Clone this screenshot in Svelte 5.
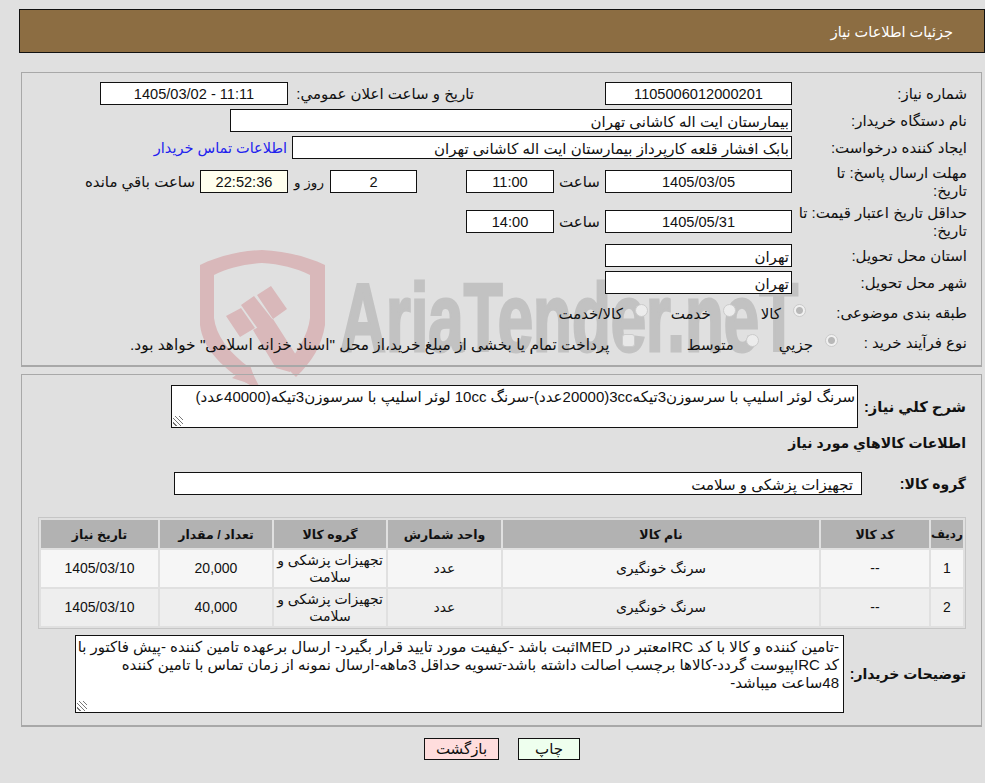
<script>
  const rows = [
    { n: 1, qty: '20,000' },
    { n: 2, qty: '40,000' }
  ];
</script>

<div class="page" dir="rtl">
  <svg class="mark" viewBox="0 0 985 783" aria-hidden="true">
    <path d="M262 250 C240 251 218 256 200 265 L200 325 C203 350 225 372 262 392 L250 368 C228 352 216 335 214 318 L214 275 C228 268 244 264 262 263 C280 264 296 268 310 275 L310 318 C308 335 298 350 286 367 L296 377 C312 362 322 345 325 325 L325 265 C306 256 284 251 262 250 Z" fill="#d9b8ba"/>
    <path d="M226 316 L241 308 L255 328 L240 337 Z M241 305 L254 296 L273 320 L258 329 Z M257 295 L271 286 L287 309 L273 319 Z M253 330 L273 319 L296 355 L290 372 L276 368 Z M232 378 L250 365 L257 386 Z" fill="#d9b8ba"/>
    <text x="340" y="351" class="mark-text" direction="ltr" textLength="458" lengthAdjust="spacingAndGlyphs">AriaTender.neT</text>
  </svg>

  <div class="title">جزئیات اطلاعات نیاز</div>

  <div class="panel top">
    <div class="row r1">
      <span class="lbl">شماره نیاز:</span>
      <span class="box w-main ltr c">1105006012000201</span>
      <span class="lbl-pub">تاریخ و ساعت اعلان عمومي:</span>
      <span class="box w-pub ltr c">1405/03/02 - 11:11</span>
    </div>
    <div class="row r2">
      <span class="lbl">نام دستگاه خریدار:</span>
      <span class="box w-buyer">بیمارستان ایت اله کاشانی تهران</span>
    </div>
    <div class="row r3">
      <span class="lbl">ایجاد کننده درخواست:</span>
      <span class="box w-creator">بابک افشار قلعه کارپرداز بیمارستان ایت اله کاشانی تهران</span>
      <span class="link">اطلاعات تماس خریدار</span>
    </div>
    <div class="row r4">
      <span class="lbl">مهلت ارسال پاسخ: تا<br />تاریخ:</span>
      <span class="box w-main ltr c">1405/03/05</span>
      <span class="lbl-time">ساعت</span>
      <span class="box w-time ltr c">11:00</span>
      <span class="box w-days ltr c">2</span>
      <span class="lbl-days">روز و</span>
      <span class="box w-left ltr c">22:52:36</span>
      <span class="lbl-left">ساعت باقي مانده</span>
    </div>
    <div class="row r5">
      <span class="lbl">حداقل تاریخ اعتبار قیمت: تا<br />تاریخ:</span>
      <span class="box w-main ltr c">1405/05/31</span>
      <span class="lbl-time">ساعت</span>
      <span class="box w-time ltr c">14:00</span>
    </div>
    <div class="row r6">
      <span class="lbl">استان محل تحویل:</span>
      <span class="box w-main">تهران</span>
    </div>
    <div class="row r7">
      <span class="lbl">شهر محل تحویل:</span>
      <span class="box w-main">تهران</span>
    </div>
    <div class="row r8">
      <span class="lbl">طبقه بندی موضوعی:</span>
      <span class="radio on s1"></span><span class="opt o1">کالا</span>
      <span class="radio"></span><span class="opt o2">خدمت</span>
      <span class="radio"></span><span class="opt">کالا/خدمت</span>
    </div>
    <div class="row r9">
      <span class="lbl">نوع فرآیند خرید :</span>
      <span class="radio on s2"></span><span class="opt o3">جزيي</span>
      <span class="radio"></span><span class="opt o4">متوسط</span>
      <span class="radio check"></span>
      <span class="opt long">پرداخت تمام یا بخشی از مبلغ خرید،از محل "اسناد خزانه اسلامی" خواهد بود.</span>
    </div>
  </div>

  <div class="panel bottom">
    <div class="need">
      <span class="blbl">شرح کلي نیاز:</span>
      <div class="area need-area">سرنگ لوئر اسلیپ با سرسوزن3تیکه3cc(20000عدد)-سرنگ 10cc لوئر اسلیپ با سرسوزن3تیکه(40000عدد)<i class="grip"></i></div>
    </div>
    <div class="goods-head">اطلاعات کالاهاي مورد نیاز</div>
    <div class="group">
      <span class="blbl">گروه کالا:</span>
      <span class="box group-box">تجهیزات پزشکی و سلامت</span>
    </div>

    <table>
      <thead>
        <tr>
          <th class="c1">ردیف</th>
          <th class="c2">کد کالا</th>
          <th class="c3">نام کالا</th>
          <th class="c4">واحد شمارش</th>
          <th class="c5">گروه کالا</th>
          <th class="c6">تعداد / مقدار</th>
          <th class="c7">تاریخ نیاز</th>
        </tr>
      </thead>
      <tbody>
        {#each rows as r}
          <tr>
            <td>{r.n}</td>
            <td>--</td>
            <td>سرنگ خونگیری</td>
            <td>عدد</td>
            <td>تجهیزات پزشکی و سلامت</td>
            <td>{r.qty}</td>
            <td>1405/03/10</td>
          </tr>
        {/each}
      </tbody>
    </table>

    <div class="notes">
      <span class="blbl">توضیحات خریدار:</span>
      <div class="area notes-area">-تامین کننده و کالا با کد IRCمعتبر در IMEDثبت باشد -کیفیت مورد تایید قرار بگیرد- ارسال برعهده تامین کننده -پیش فاکتور با<br />کد IRCپیوست گردد-کالاها برچسب اصالت داشته باشد-تسویه حداقل 3ماهه-ارسال نمونه از زمان تماس با تامین کننده<br />48ساعت میباشد-<i class="grip"></i></div>
    </div>
  </div>

  <div class="actions">
    <button class="print">چاپ</button>
    <button class="back">بازگشت</button>
  </div>
</div>

<style>
  :global(body) {
    margin: 0;
    background: #e0e0e0;
  }

  .page {
    position: relative;
    width: 985px;
    height: 783px;
    box-sizing: border-box;
    padding-top: 9px;
    font-family: "Liberation Sans", "DejaVu Sans", sans-serif;
    font-size: 15px;
    color: #111;
    overflow: hidden;
  }

  .title {
    margin-left: 19px;
    height: 44px;
    box-sizing: border-box;
    border: 1px solid #111;
    background: #8c6d42;
    color: #fff;
    font-size: 14.5px;
    padding: 13px 31px 0 0;
    line-height: 18px;
  }

  .panel {
    position: relative;
    margin: 0 3px 0 21px;
    box-sizing: border-box;
    border: 1px solid #a8a8a8;
    border-bottom-width: 2px;
  }

  .top {
    height: 295px;
    margin-top: 19px;
    padding-top: 9px;
  }

  .bottom {
    height: 353px;
    margin-top: 7px;
  }

  .mark {
    position: absolute;
    left: 0;
    top: 0;
    width: 985px;
    height: 783px;
  }

  .mark-text {
    font-family: "Liberation Sans", sans-serif;
    font-weight: 700;
    font-size: 96px;
    fill: #c2c2c2;
    stroke: #c2c2c2;
    stroke-width: 3px;
  }

  .row {
    display: flex;
    align-items: center;
    height: 23px;
  }

  .lbl {
    width: 175px;
    margin-right: 14px;
    flex: none;
    line-height: 18px;
    white-space: nowrap;
  }

  .box {
    flex: none;
    box-sizing: border-box;
    height: 23px;
    line-height: 21px;
    border: 1px solid #111;
    background: #fff;
    padding: 1px 2px 0;
    white-space: nowrap;
    overflow: hidden;
  }

  .ltr {
    direction: ltr;
    font-size: 14.6px;
  }

  .c { text-align: center; }

  .w-main { width: 187px; }
  .w-pub { width: 188px; }
  .w-buyer { width: 562px; }
  .w-creator { width: 500px; }
  .w-time { width: 88px; }
  .w-days { width: 87px; margin-right: 49px; }
  .w-left { width: 88px; background: #ffffee; }

  .r1, .r2 { margin-bottom: 4px; }
  .r3 { margin-bottom: 11px; }
  .r4 { margin-bottom: 17px; }
  .r5 { margin-bottom: 11px; }
  .r6 { margin-bottom: 4px; }
  .r7 { margin-bottom: 8px; }
  .r8 { height: 22px; margin-bottom: 8px; }
  .r9 { height: 22px; }

  .lbl-pub {
    flex: none;
    width: 181px;
    margin-left: 5px;
    padding-right: 131px;
    white-space: nowrap;
  }

  .lbl-time {
    flex: none;
    width: 41px;
    margin: 0 5px;
    text-align: center;
  }

  .lbl-days {
    flex: none;
    width: 32px;
    margin: 0 5px;
    font-size: 13.5px;
    text-align: center;
    white-space: nowrap;
  }

  .lbl-left {
    flex: none;
    margin-right: 5px;
    white-space: nowrap;
  }

  .link {
    color: #2222ee;
    font-size: 14.5px;
    margin-right: 5px;
    white-space: nowrap;
  }

  .radio {
    flex: none;
    width: 13px;
    height: 13px;
    border-radius: 50%;
    border: 1px solid #cbcbcb;
    background: #ececec;
    box-sizing: border-box;
    margin: -5px 0 0 12px;
  }

  .radio.on {
    background: radial-gradient(circle, #b8b8b8 0 3px, #f0f0f0 4px);
  }

  .radio.check {
    border-radius: 3px;
    background: #e8e8e8;
    margin-right: 52px;
  }

  .s1 { margin-right: -14px; }
  .s2 { margin-right: -46px; }

  .opt {
    flex: none;
    white-space: nowrap;
    margin-top: 1px;
  }

  .r9 .opt { margin-top: 3px; }

  .o1 { margin-left: 25px; }
  .o2 { margin-left: 23px; }
  .o3 { margin-left: 20px; }
  .o4 { margin-left: 0; }
  .long { font-size: 15.4px; }

  .need,
  .group,
  .notes {
    display: flex;
    align-items: center;
  }

  .need {
    padding: 10px 15px 0 0;
  }

  .blbl {
    font-weight: 700;
    font-size: 14px;
    flex: none;
    white-space: nowrap;
  }

  .need .blbl { width: 108px; font-size: 14.7px; }
  .group .blbl { width: 104px; }
  .notes .blbl { width: 122px; }

  .area {
    position: relative;
    box-sizing: border-box;
    border: 1px solid #111;
    background: #fff;
    flex: none;
    padding: 2px 4px 0;
    line-height: 18px;
  }

  .need-area {
    width: 687px;
    height: 43px;
    padding-right: 2px;
  }

  .notes-area {
    width: 769px;
    height: 78px;
    white-space: nowrap;
  }

  .grip {
    position: absolute;
    left: 1px;
    bottom: 1px;
    width: 10px;
    height: 10px;
    background: repeating-linear-gradient(45deg, transparent 0 2px, #777 2px 3px);
  }

  .goods-head {
    font-weight: 700;
    font-size: 14px;
    padding: 5px 15px 0 0;
    line-height: 20px;
    height: 35px;
    box-sizing: border-box;
  }

  .group {
    padding: 6px 15px 0 0;
    height: 29px;
  }

  .group-box {
    width: 688px;
    padding-right: 8px;
  }

  table {
    width: 928px;
    margin: 19px 15px 0 0;
    border-collapse: separate;
    border-spacing: 2px;
    border: 1px solid #c6c6c6;
    background: #e0e0e0;
    table-layout: fixed;
    font-size: 14px;
  }

  th {
    background: #b2b2b2;
    height: 28px;
    padding: 0;
    font-size: 12.5px;
    white-space: nowrap;
  }

  th.c1 { font-size: 12px; }

  td {
    text-align: center;
    background: #f6f6f6;
    height: 37px;
    padding: 0;
    line-height: 17px;
  }

  tbody tr:nth-child(2) td { background: #eeeeee; }

  .c1 { width: 32px; }
  .c2 { width: 108px; }
  .c3 { width: 316px; }
  .c4 { width: 113px; }
  .c5 { width: 112px; }
  .c6 { width: 112px; }
  .c7 { width: 117px; }

  .notes {
    padding: 6px 15px 0 0;
  }

  .actions {
    position: relative;
    display: flex;
    justify-content: center;
    gap: 19px;
    margin-top: 11px;
    padding-left: 19px;
  }

  button {
    font: inherit;
    height: 22px;
    padding: 0;
    border: 1px solid #111;
    color: #111;
  }

  .print { width: 62px; background: #eeffee; }
  .back { width: 75px; background: #ffdddd; }
</style>
